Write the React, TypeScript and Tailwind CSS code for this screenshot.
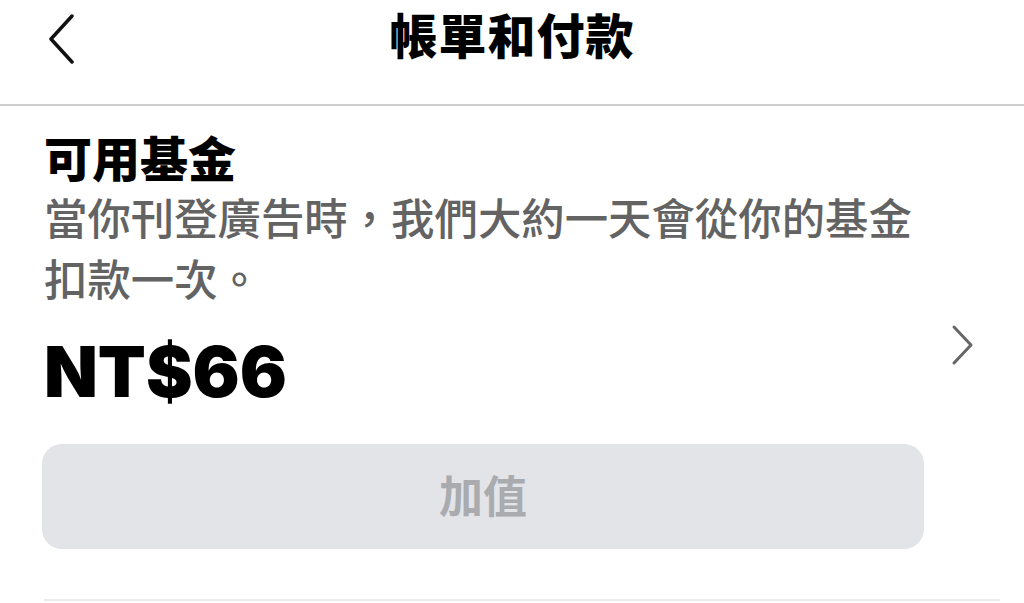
import React from "react";

const cjk = { fontFamily: '"Noto Sans CJK TC", "Noto Sans", sans-serif' };

export default function App() {
  return (
    <div className="w-[1024px] h-[603px] bg-white overflow-hidden" style={cjk}>
      {/* Header */}
      <div className="relative h-[106px] border-b-2 border-[#cfcfcf] flex items-start justify-center pt-[1px]">
        <div className="absolute left-[46px] top-[14px]">
          <svg width="32" height="50" viewBox="0 0 32 50" fill="none">
            <path d="M26 2 L5 25 L26 48" stroke="#111" strokeWidth="3.5" strokeLinecap="round" strokeLinejoin="round" />
          </svg>
        </div>
        <div className="text-[48px] font-black text-black leading-[64px] tracking-[1px]">帳單和付款</div>
      </div>

      {/* Funds section */}
      <div className="flex">
        <div className="flex-1 pl-[44px] pt-[23px]">
          <div className="text-[48px] font-black text-black leading-[54px]">可用基金</div>
          <div className="text-[43.4px] font-medium text-[#636363] leading-[61px] mt-[3px] w-[880px]">
            當你刊登廣告時，我們大約一天會從你的基金扣款一次。
          </div>
          <div className="flex mt-[24px]">
            <div
              className="text-[70px] font-black text-black leading-[80px]"
              style={{ fontFamily: 'Inter, "Liberation Sans", sans-serif' }}
            >
              NT$66
            </div>
          </div>
          <div className="mt-[32px] w-[882px] h-[105px] -ml-[2px] rounded-[20px] bg-[#e2e4e8] flex items-center justify-center">
            <span className="text-[44px] font-bold text-[#a9abaf] leading-none -mt-[6px]">加值</span>
          </div>
        </div>
        <div className="w-[70px] pt-[218px] flex justify-start">
          <svg width="28" height="42" viewBox="0 0 28 42" fill="none" className="ml-[-5px]">
            <path d="M5 3 L22 21 L5 39" stroke="#666" strokeWidth="3" strokeLinecap="round" strokeLinejoin="round" />
          </svg>
        </div>
      </div>
      <div className="ml-[44px] mr-[24px] mt-[50px] border-t-2 border-[#ebebeb]" />
    </div>
  );
}
